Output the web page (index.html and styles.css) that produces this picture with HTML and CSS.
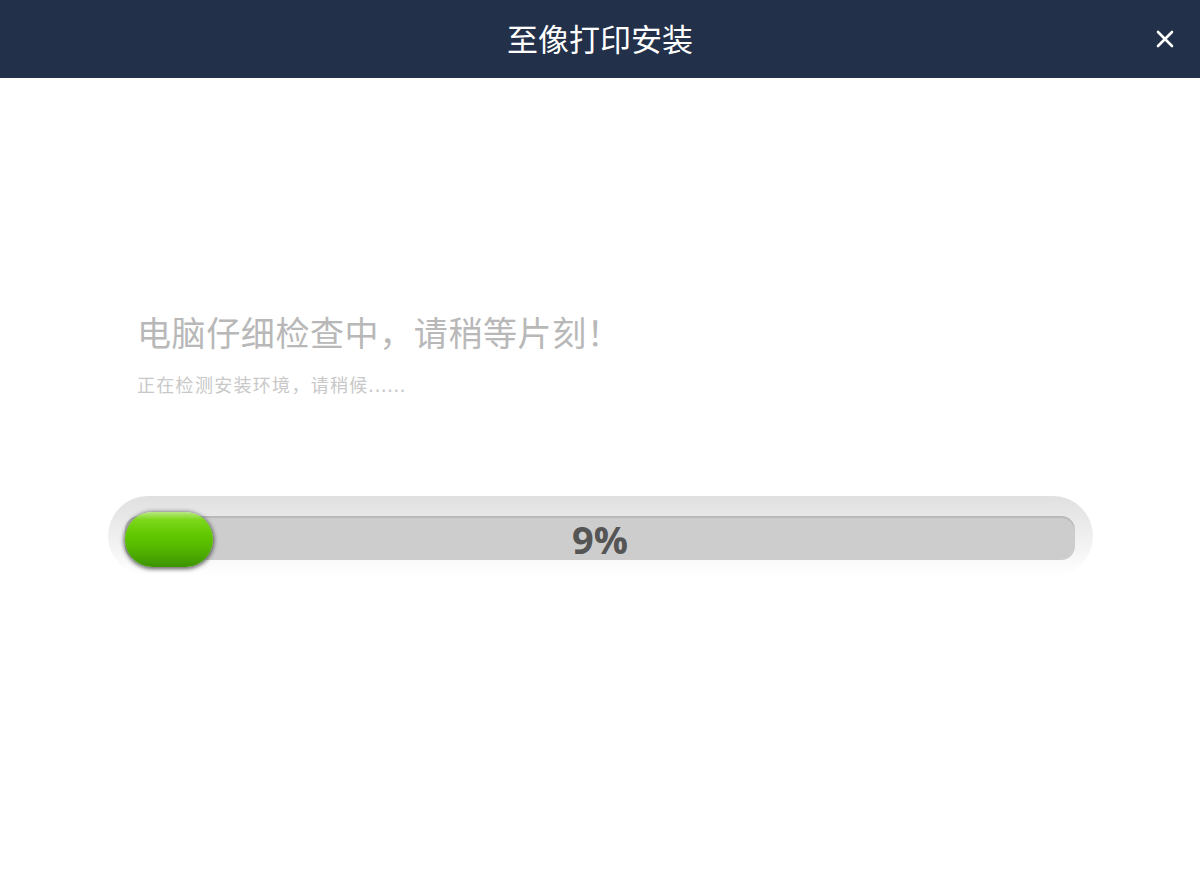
FILE: index.html
```html
<!DOCTYPE html>
<html lang="zh-CN">
<head>
  <meta charset="UTF-8">
  <title>至像打印安装</title>
  <link rel="stylesheet" href="styles.css">
</head>
<body>

<div class="header">
  <h1 class="title">至像打印安装</h1>
  <button class="close-btn" aria-label="关闭">
    <svg width="18" height="18" viewBox="0 0 18 18">
      <path d="M2 2 L16 16 M16 2 L2 16" stroke="#fff" stroke-width="2.6" stroke-linecap="round"/>
    </svg>
  </button>
</div>

<div class="content">
  <div class="message">
    <h2 class="msg-title">电脑仔细检查中，请稍等片刻！</h2>
    <p class="msg-sub">正在检测安装环境，请稍候......</p>
  </div>

  <div class="progress-outer">
    <div class="progress-track">
      <div class="progress-bar" style="width: 88px;"></div>
      <span class="progress-text">9%</span>
    </div>
  </div>
</div>

</body>
</html>
```

FILE: styles.css
```css
* {
  margin: 0;
  padding: 0;
  box-sizing: border-box;
}

body {
  font-family: "Noto Sans CJK SC", "Noto Sans", sans-serif;
  background: #ffffff;
  width: 1200px;
  height: 893px;
  overflow: hidden;
}

.header {
  height: 78px;
  background: #22304a;
  display: flex;
  align-items: center;
  justify-content: center;
  position: relative;
}

.title {
  color: #ffffff;
  font-size: 31px;
  font-weight: 400;
  line-height: 40px;
  position: relative;
  top: -1px;
}

.close-btn {
  position: absolute;
  right: 26px;
  top: 30px;
  background: none;
  border: none;
  cursor: pointer;
  display: flex;
}

.content {
  padding: 0 107px 0 108px;
}

.message {
  padding: 230px 0 0 29px;
}

.msg-title {
  font-size: 34px;
  font-weight: 400;
  letter-spacing: 0.6px;
  color: #b8b8b8;
  line-height: 48px;
}

.msg-sub {
  margin-top: 16px;
  font-size: 18px;
  letter-spacing: 1.3px;
  color: #c8c8c8;
  line-height: 24px;
}

.progress-outer {
  margin-top: 100px;
  height: 80px;
  border-radius: 40px;
  background: linear-gradient(to bottom, #e0e0e0 0%, #efefef 50%, #ffffff 100%);
  padding: 20px 18px 0 17px;
}

.progress-track {
  height: 44px;
  border-radius: 14px;
  background: #cdcdcd;
  box-shadow: inset 0 2px 1px rgba(0, 0, 0, 0.1);
  position: relative;
  display: flex;
  align-items: center;
  justify-content: center;
}

.progress-bar {
  position: absolute;
  left: 0;
  top: -4px;
  height: 55px;
  border-radius: 28px;
  background: linear-gradient(to bottom, #b8e880 0%, #7cd81a 14%, #62c800 40%, #55b800 65%, #3c9400 100%);
  box-shadow: 0 1px 4px 1px rgba(30, 30, 30, 0.7);
}

.progress-text {
  font-family: "Open Sans", "Noto Sans", sans-serif;
  font-size: 38px;
  font-weight: 700;
  color: #555555;
  position: relative;
  top: 1px;
}
```
